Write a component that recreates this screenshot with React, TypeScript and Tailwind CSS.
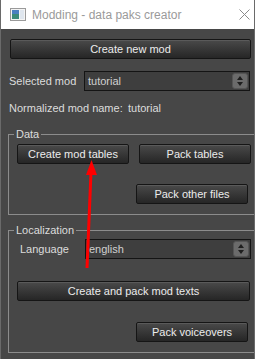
import React from "react";

const font = { fontFamily: '"Liberation Sans", Arial, sans-serif' };

const Btn = ({ label, className = "" }: { label: string; className?: string }) => (
  <div
    className={`h-[20px] flex items-center justify-center whitespace-nowrap border border-[#151515] rounded-[2px] bg-gradient-to-b from-[#4a4a4a] to-[#262626] text-[11px] leading-[16px] text-[#ececec] shadow-[inset_0_1px_0_#5a5a5a] ${className}`}
  >
    {label}
  </div>
);

const Select = ({ value }: { value: string }) => (
  <div className="w-[166px] h-[20px] flex items-center border border-[#141414] bg-[#3e3e3e] pl-[3px] pr-[1px] text-[11px] leading-[16px] text-[#d0d0d0]">
    <span className="flex-1">{value}</span>
    <div className="w-[16px] h-[16px] rounded-[3px] bg-[#6b6b6b] border border-[#555] flex flex-col items-center justify-center gap-[2px]">
      <svg width="6" height="4" viewBox="0 0 6 4">
        <polygon points="3,0 6,4 0,4" fill="#1e1e1e" />
      </svg>
      <svg width="6" height="4" viewBox="0 0 6 4">
        <polygon points="0,0 6,0 3,4" fill="#1e1e1e" />
      </svg>
    </div>
  </div>
);

const Group = ({ title, children }: { title: string; children: React.ReactNode }) => (
  <div className="ml-[7px] w-[252px] border border-[#8c8c8c] pl-[8px] pb-[10px]">
    <div className="-mt-[9px] -ml-[3px] w-fit px-[2px] bg-[#474747] leading-[16px] text-[11px] text-[#dcdcdc] whitespace-nowrap">
      {title}
    </div>
    {children}
  </div>
);

export default function App() {
  return (
    <div
      className="relative w-[255px] h-[359px] overflow-hidden bg-[#474747] border-x border-[#6a6a6a]"
      style={font}
    >
      <div className="h-[29px] bg-white flex items-center pl-[9px] pr-[4px]">
        <svg width="16" height="13" viewBox="0 0 16 13">
          <rect x="0.5" y="0.5" width="15" height="12" fill="#f4f4f4" stroke="#9a9a9a" />
          <rect x="2" y="2" width="7" height="9" fill="#3c8a7a" />
          <rect x="2" y="2" width="7" height="4" fill="#4a7fc0" />
          <rect x="10" y="2" width="4" height="9" fill="#dfe6ee" />
        </svg>
        <span className="ml-[6px] text-[12px] leading-[16px] text-[#9a9a9a] flex-1 whitespace-nowrap">Modding - data paks creator</span>
        <svg width="11" height="11" viewBox="0 0 11 11">
          <path d="M0.5 0.5 L10.5 10.5 M10.5 0.5 L0.5 10.5" stroke="#8a8a8a" strokeWidth="1" />
        </svg>
      </div>

      <div className="pl-[9px]">
        <Btn label="Create new mod" className="mt-[10px] w-[241px]" />

        <div className="mt-[12px] flex items-center">
          <span className="w-[75px] -ml-[1px] text-[11px] leading-[16px] text-[#dcdcdc] whitespace-nowrap">Selected mod</span>
          <Select value="tutorial" />
        </div>

        <div className="mt-[9px] flex leading-[16px] text-[11px] text-[#dcdcdc] -ml-[1px] whitespace-nowrap">
          <span className="w-[119px]">Normalized mod name:</span>
          <span>tutorial</span>
        </div>
      </div>

      <div className="mt-[18px]">
        <Group title="Data">
          <div className="mt-[2px] flex gap-[10px]">
            <Btn label="Create mod tables" className="w-[112px]" />
            <Btn label="Pack tables" className="w-[112px]" />
          </div>
          <div className="mt-[20px] flex justify-end pr-[11px]">
            <Btn label="Pack other files" className="w-[112px]" />
          </div>
        </Group>
      </div>

      <div className="mt-[15px]">
        <Group title="Localization">
          <div className="mt-[1px] flex items-center">
            <span className="w-[68px] pl-[3px] text-[11px] leading-[16px] text-[#dcdcdc] whitespace-nowrap">Language</span>
            <Select value="english" />
          </div>
          <Btn label="Create and pack mod texts" className="mt-[22px] w-[233px]" />
          <div className="mt-[21px] flex justify-end pr-[11px]">
            <Btn label="Pack voiceovers" className="w-[112px]" />
          </div>
        </Group>
      </div>

      <svg className="absolute left-0 top-0 pointer-events-none" width="255" height="359" viewBox="0 0 255 359">
        <line x1="86" y1="268" x2="90" y2="172" stroke="#ff0000" strokeWidth="3" />
        <polygon points="90.5,160 85,175 96,175" fill="#ff0000" />
      </svg>
    </div>
  );
}
